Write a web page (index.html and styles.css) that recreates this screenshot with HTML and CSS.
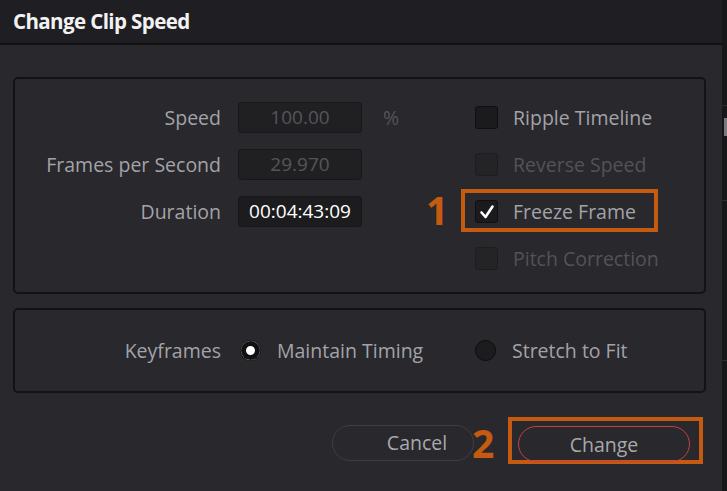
FILE: index.html
```html
<!DOCTYPE html>
<html>
<head>
<meta charset="utf-8">
<link rel="stylesheet" href="styles.css">
</head>
<body>
<div class="screen">
  <div class="dialog">
    <div class="titlebar"><span class="title">Change Clip Speed</span></div>
    <div class="content">
      <div class="panel panel-main">
        <div class="fields">
          <div class="label">Speed</div>
          <div class="input disabled">100.00</div>
          <div class="unit">%</div>
          <div class="label">Frames per Second</div>
          <div class="input disabled">29.970</div>
          <div class="unit"></div>
          <div class="label">Duration</div>
          <div class="input active">00:04:43:09</div>
          <div class="unit"></div>
        </div>
        <div class="checks">
          <div class="check-row"><span class="box"></span><span class="ctext">Ripple Timeline</span></div>
          <div class="check-row dim"><span class="box"></span><span class="ctext">Reverse Speed</span></div>
          <div class="check-row marked">
            <span class="step step-1">1</span>
            <span class="box checked"><svg viewBox="0 0 20 20" width="20" height="20"><path d="M4.5 10.5 L8.5 15 L15.5 4.5" fill="none" stroke="#ffffff" stroke-width="2.6" stroke-linecap="round" stroke-linejoin="round"/></svg></span>
            <span class="ctext">Freeze Frame</span>
          </div>
          <div class="check-row dim"><span class="box"></span><span class="ctext">Pitch Correction</span></div>
        </div>
      </div>
      <div class="panel panel-keys">
        <div class="label keylabel">Keyframes</div>
        <div class="opt opt-1"><span class="radio on"></span><span class="rtext">Maintain Timing</span></div>
        <div class="opt"><span class="radio off"></span><span class="rtext">Stretch to Fit</span></div>
      </div>
      <div class="actions">
        <button class="btn cancel">Cancel</button>
        <span class="step step-2">2</span>
        <div class="highlight"><button class="btn change">Change</button></div>
      </div>
    </div>
  </div>
  <div class="strip">
    <span class="strip-line l1"></span>
    <span class="strip-knob"></span>
    <span class="strip-line l2"></span>
    <span class="strip-line l3"></span>
  </div>
</div>
</body>
</html>
```
FILE: styles.css
```css
*, *::before, *::after { box-sizing: border-box; }
html, body { margin: 0; padding: 0; }
body {
  width: 727px;
  height: 491px;
  overflow: hidden;
  background: #28282d;
  font-family: "Open Sans", "Noto Sans", sans-serif;
}
.screen { display: flex; width: 727px; height: 491px; }
.dialog { width: 722px; height: 491px; background: #28282d; display: flex; flex-direction: column; }
.titlebar {
  height: 45px;
  background: #1f1f23;
  border-bottom: 2px solid #121214;
  padding-left: 13px;
  display: flex;
  align-items: center;
}
.title {
  color: #f2f2f2;
  font-weight: 700;
  font-size: 20.5px;
  letter-spacing: -0.6px;
  margin-top: -2px;
}
.content { padding: 32px 16px 0 13px; display: flex; flex-direction: column; }
.panel {
  border: 2px solid #131315;
  border-radius: 5px;
  background: #28282d;
}
.panel-main { height: 217px; display: flex; padding-top: 15px; }
.fields {
  display: grid;
  grid-template-columns: 206px 124px 40px;
  grid-auto-rows: 47px;
  column-gap: 17px;
  align-items: center;
}
.label { color: #a3a3a7; font-size: 19.5px; text-align: right; }
.input {
  height: 31px;
  border: 1px solid #18181a;
  background: #202023;
  border-radius: 3px;
  font-size: 19px;
  text-align: center;
  line-height: 29px;
}
.input.disabled { color: #55555a; }
.input.active { color: #ffffff; background: #1c1c1f; }
.unit { color: #55555a; font-size: 19.5px; padding-left: 4px; }
.checks { margin-left: 56px; display: flex; flex-direction: column; }
.check-row { height: 47px; display: flex; align-items: center; position: relative; }
.box {
  width: 23px; height: 23px;
  border: 1px solid #0f0f11;
  background: #1b1b1d;
  border-radius: 3px;
  display: flex; align-items: center; justify-content: center;
}
.ctext { margin-left: 15px; color: #a3a3a7; font-size: 19.5px; }
.check-row.dim .box { background: #242427; border-color: #1d1d20; }
.check-row.dim .ctext { color: #535357; }
.check-row.marked::after {
  content: "";
  position: absolute;
  left: -14px; top: 1px;
  width: 197px; height: 43px;
  border: 4px solid #c55a11;
}
.step { color: #c55a11; font-weight: 700; font-size: 39px; line-height: 1; }
.step-1 { position: absolute; left: -49px; top: 2px; }
.panel-keys {
  margin-top: 14px;
  height: 85px;
  display: flex;
  align-items: center;
}
.keylabel { width: 206px; }
.opt { display: flex; align-items: center; }
.opt-1 { width: 235px; margin-left: 19px; }
.radio {
  width: 21px; height: 21px; border-radius: 50%;
  background: #1a1a1c;
  border: 1px solid #0c0c0e;
  display: inline-block;
  flex: none;
}
.radio.on { box-shadow: inset 0 0 0 5px #111113; background: #ffffff; }
.radio.off { background: #1c1c1e; }
.rtext { color: #a3a3a7; font-size: 19.5px; margin-left: 16px; }
.actions {
  margin-top: 24px;
  display: flex;
  align-items: center;
  padding-left: 319px;
}
.btn {
  font-family: inherit;
  font-size: 19.5px;
  color: #a8a8ac;
  background: transparent;
  border-radius: 18px;
  height: 36px;
  padding: 0;
}
.cancel { width: 142px; border: 1px solid #3e3e44; padding-left: 28px; margin-top: 4px; }
.step-2 { margin-left: -2px; width: 36px; margin-top: 4px; }
.highlight {
  border: 4px solid #c55a11;
  width: 195px; height: 47px;
  padding: 5px 0 0 6px;
}
.change { width: 172px; border: 1px solid #c94043; }
.strip { width: 5px; background: #17171a; position: relative; }
.strip-line { position: absolute; left: 0; width: 5px; height: 1px; background: #2c2c30; }
.l1 { top: 105px; } .l2 { top: 200px; } .l3 { top: 360px; }
.strip-knob { position: absolute; left: 2px; top: 118px; width: 3px; height: 18px; background: #7a7a7e; }
```
